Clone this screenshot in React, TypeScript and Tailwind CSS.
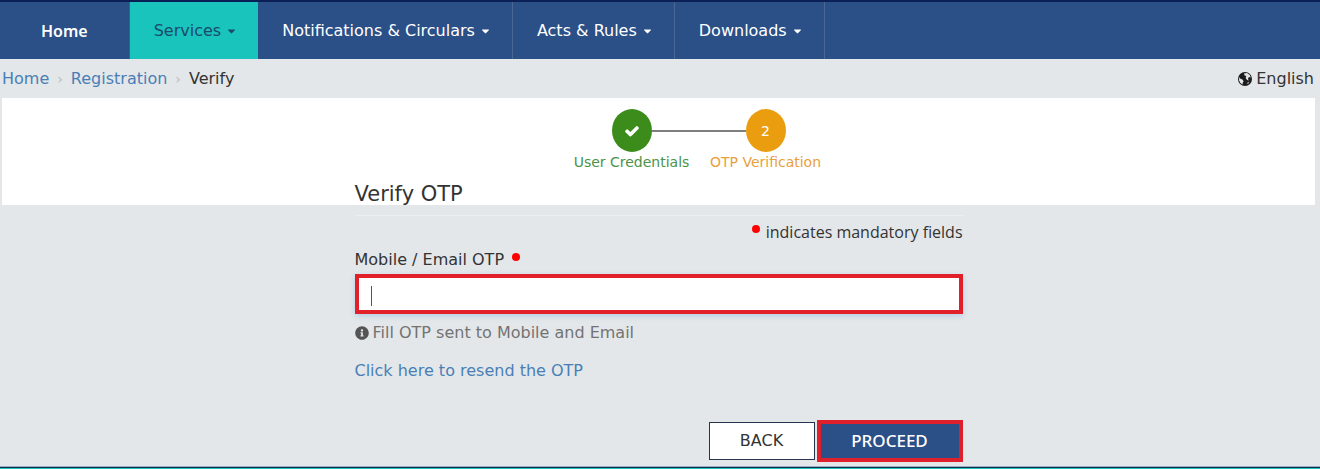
import React from 'react';
import { FaCaretDown, FaInfoCircle } from 'react-icons/fa';

const menus = [
    { label: 'Notifications & Circulars', link: '#notifications' },
    { label: 'Acts & Rules', link: '#acts' },
    { label: 'Downloads', link: '#downloads' },
];

const NavBar = () => {
    return (
        <nav className="w-full bg-[#2b4f87] border-t-2 border-[#0a1f56] text-white">
            <ul className="flex flex-row h-[57px]">
                <li className="flex border-r border-[#3f5f90]">
                    <a href="#home" className="flex items-center px-[41px] font-semibold font-['Noto_Sans',sans-serif]">Home</a>
                </li>
                <li className="flex">
                    <a href="#services" className="flex items-center gap-1.5 pl-6 pr-[22px] bg-[#18c4bc] text-[#1b4a6b]">
                        Services <FaCaretDown className="w-[9px] h-3" />
                    </a>
                </li>
                {menus.map((menu) => (
                    <li key={menu.label} className="flex border-r border-[#4a6794]">
                        <a href={menu.link} className="flex items-center gap-1.5 pl-6 pr-[22px]">
                            {menu.label} <FaCaretDown className="w-[9px] h-3" />
                        </a>
                    </li>
                ))}
            </ul>
        </nav>
    )
}

const Breadcrumb = () => {
    return (
        <div className="flex flex-row items-center justify-between h-[39px] pl-0.5 pr-1.5">
            <div className="flex flex-row items-center gap-2">
                <a href="#home" className="text-[#4a7fb5]">Home</a>
                <span className="text-sm text-[#b9bec2]">›</span>
                <a href="#registration" className="text-[#4a7fb5]">Registration</a>
                <span className="text-sm text-[#b9bec2]">›</span>
                <span>Verify</span>
            </div>
            <a href="#language" className="flex flex-row items-center gap-1">
                <svg viewBox="0 0 14 14" className="w-[14px] h-[14px]">
                    <circle cx="7" cy="7" r="7" fill="#1c1c1c" />
                    <path d="M6 1.4 L9 1 L11.6 2.8 L12.8 5.4 L11 5 L10 6.6 L10.6 8.4 L9.2 8 L7.6 6 L8.4 4 L6.6 3.4 Z" fill="#e3e7ea" />
                    <path d="M1.2 5 L2.4 6.8 L4.4 7.6 L5.6 9.2 L4.8 10.6 L4.6 12.4 L2.4 11 L1.1 8.4 Z" fill="#e3e7ea" />
                    <path d="M8.6 11.2 L10.4 9.8 L11.4 10.2 L10 12 Z" fill="#9a9ea1" />
                </svg>
                English
            </a>
        </div>
    )
}

const Steps = () => {
    return (
        <ol className="flex flex-row justify-center pl-20 pt-[11px] text-sm">
            <li className="w-[134px] flex flex-col items-center">
                <div className="w-full flex flex-row items-center">
                    <div className="flex-1"></div>
                    <div className="w-10 h-[43px] rounded-[50%] bg-[#3c8c1c] text-white grid place-content-center">
                        <svg viewBox="0 0 1792 1792" fill="currentColor" className="w-4 h-4">
                            <path d="M1671 566q0 40-28 68l-724 724-136 136q-28 28-68 28t-68-28l-136-136-362-362q-28-28-28-68t28-68l136-136q28-28 68-28t68 28l294 295 656-657q28-28 68-28t68 28l136 136q28 28 28 68z" />
                        </svg>
                    </div>
                    <div className="flex-1 h-0.5 bg-[#7f7f7f]"></div>
                </div>
                <span className="leading-5 text-[#4a9447]">User Credentials</span>
            </li>
            <li className="w-[134px] flex flex-col items-center">
                <div className="w-full flex flex-row items-center">
                    <div className="flex-1 h-0.5 bg-[#7f7f7f]"></div>
                    <div className="w-10 h-[43px] rounded-[50%] bg-[#eb9d10] text-white grid place-content-center">2</div>
                    <div className="flex-1"></div>
                </div>
                <span className="leading-5 text-[#e9a03c]">OTP Verification</span>
            </li>
        </ol>
    )
}

const Mandatory = () => <span className="inline-block w-2 h-2 rounded-full bg-[#ff0000]"></span>

const App = () => {
    return (
        <div className="w-full bg-[#e3e7ea] text-[#333333] text-base font-['DejaVu_Sans',Verdana,sans-serif]">
            <NavBar />
            <Breadcrumb />

            <main className="pl-0.5 pr-[5px]">
                <div className="bg-white h-[107px]">
                    <Steps />
                    <div className="w-full max-w-[608px] mx-auto">
                        <h1 className="text-[21px] leading-6 pt-2.5">Verify OTP</h1>
                    </div>
                </div>

                <form className="w-full max-w-[608px] mx-auto pt-2.5" onSubmit={(e) => e.preventDefault()}>
                    <div className="border-t border-[#eceff1] pt-1 flex flex-row items-center justify-end gap-1.5 font-['Open_Sans',sans-serif]">
                        <span className="flex pb-1.5"><Mandatory /></span>
                        <span className="leading-6">indicates mandatory fields</span>
                    </div>

                    <div className="flex flex-row items-center gap-2 pt-1">
                        <label htmlFor="otp" className="leading-6">Mobile / Email OTP</label>
                        <span className="flex pb-1.5"><Mandatory /></span>
                    </div>
                    <div className="relative mt-0.5">
                        <input id="otp" type="text" className="block w-full h-10 px-3 bg-white border-4 border-[#e1202a] outline-none shadow-[0_2px_6px_#b4cfe6]" />
                        <span className="absolute left-4 top-3 w-px h-5 bg-[#555555]"></span>
                    </div>

                    <p className="flex flex-row items-center gap-1 pt-[7px] leading-6 text-[#737373]">
                        <FaInfoCircle className="w-[14px] h-[14px] text-[#555555]" />
                        Fill OTP sent to Mobile and Email
                    </p>
                    <p className="pt-3.5 leading-6">
                        <a href="#resend" className="text-[#4a7fb5]">Click here to resend the OTP</a>
                    </p>

                    <div className="flex flex-row items-center justify-end gap-0.5 pt-[37px] pb-1">
                        <button type="button" className="w-[106px] h-[38px] bg-white border border-[#26344f]">BACK</button>
                        <button type="submit" className="w-[146px] h-[42px] bg-[#2b4f87] border-4 border-[#de202c] text-white text-[17px] font-medium font-['Noto_Sans',sans-serif]">PROCEED</button>
                    </div>
                </form>
            </main>

            <footer className="border-t border-[#9aabc4]">
                <div className="h-px bg-[#0d2f4a]"></div>
                <div className="h-px bg-[#18c4bc]"></div>
            </footer>
        </div>
    )
}

export default App
